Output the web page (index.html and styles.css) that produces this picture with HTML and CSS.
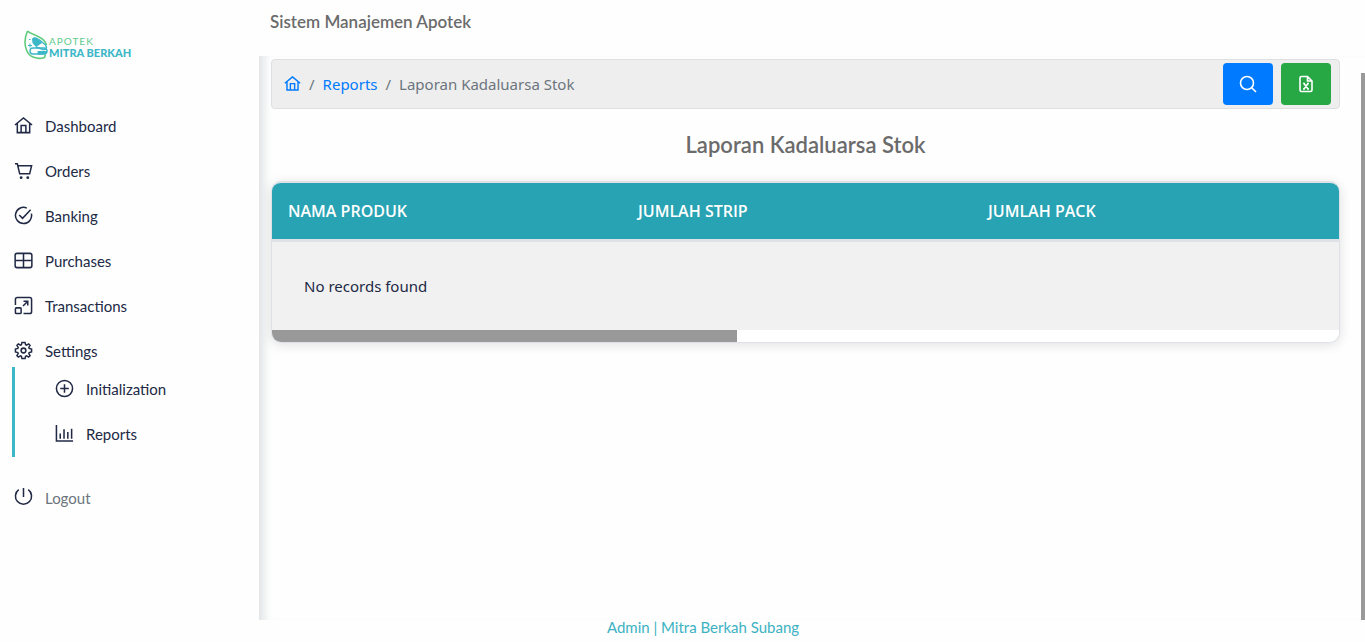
FILE: index.html
```html
<!DOCTYPE html>
<html lang="id">
<head>
    <meta charset="UTF-8">
    <meta name="viewport" content="width=device-width, initial-scale=1.0">
    <title>Sistem Manajemen Apotek</title>
    <link rel="stylesheet" href="styles.css">
</head>
<body>
    <div class="layout">
        <aside class="sidebar">
            <a href="#" class="logo">
                <svg class="logo-mark" viewBox="0 0 24 32" width="24" height="32" fill="none">
                    <path d="M3.500 2C1 8 0 15 2.500 21C5 28 13 31 20.500 28.500L21.500 25.500M3.500 2C6 5 10 5 15 8C19 10 21.500 12 22.500 16" stroke="#5fcb7c" stroke-width="1.600"/>
                    <path d="M8 10C9 7.500 13 7.500 15 10.500L18 14L12 18L8.500 14Z" fill="#3cb7c7"/>
                    <path d="M15 10.500L21.500 16C23.500 18.500 22 21 19 20.500L12 18" stroke="#3cb7c7" stroke-width="1.400"/>
                    <rect x="6" y="19" width="17" height="6" rx="3" stroke="#3cb7c7" stroke-width="1.400"/>
                    <path d="M14 22.500H23C22.500 24.500 21 25 19.500 25H14ZM4 16.500H8M6 14.500V18.500M5 10.500H6.500" fill="#3cb7c7" stroke="#3cb7c7"/>
                </svg>
                <span class="logo-text">
                    <span class="logo-top">APOTEK</span>
                    <span class="logo-name">MITRA BERKAH</span>
                </span>
            </a>

            <nav class="menu">
                <a href="#">
                    <svg class="icon" viewBox="0 0 20 20"><path d="M1 9.500L10 2L19 9.500M3.500 8V17.500H16.500V8M7.500 17.500V10H12.500V17.500"/></svg>
                    Dashboard
                </a>
                <a href="#">
                    <svg class="icon" viewBox="0 0 20 20"><path d="M1 3H3.500L6 13.500H16.500L18.500 5H4.200"/><circle class="dot" cx="7.500" cy="17.500" r="1.500"/><circle class="dot" cx="14.500" cy="17.500" r="1.500"/></svg>
                    Orders
                </a>
                <a href="#">
                    <svg class="icon" viewBox="0 0 20 20"><path d="M18.300 8A8.500 8.500 0 1 1 13.500 2.200M5.500 9.500L9 13L17.500 4"/></svg>
                    Banking
                </a>
                <a href="#">
                    <svg class="icon" viewBox="0 0 20 20"><rect x="1.200" y="2.500" width="17.600" height="15" rx="2"/><path d="M10 2.500V17.500M1.200 10H18.800"/></svg>
                    Purchases
                </a>
                <a href="#">
                    <svg class="icon" viewBox="0 0 20 20"><path d="M1.500 9.500V3.500Q1.500 1.500 3.500 1.500H16.500Q18.500 1.500 18.500 3.500V16.500Q18.500 18.500 16.500 18.500H10M9.500 10.500L14.500 5.500M10 5.500H14.500V10"/><rect x="1.500" y="12.500" width="6" height="6" rx="1"/></svg>
                    Transactions
                </a>
                <a href="#">
                    <svg class="icon" viewBox="0 0 20 20"><path d="M8.400 1.500H11.600L12.200 4L13.200 4.400L15.400 3.100L16.900 4.600L15.600 6.800L16 7.800L18.500 8.400V11.600L16 12.200L15.600 13.200L16.900 15.400L15.400 16.900L13.200 15.600L12.200 16L11.600 18.500H8.400L7.800 16L6.800 15.600L4.600 16.900L3.100 15.400L4.400 13.200L4 12.200L1.500 11.600V8.400L4 7.800L4.400 6.800L3.100 4.600L4.600 3.100L6.800 4.400L7.800 4Z"/><circle cx="10" cy="10" r="2.500"/></svg>
                    Settings
                </a>
                <div class="submenu">
                    <a href="#">
                        <svg class="icon" viewBox="0 0 20 20"><circle cx="10" cy="10" r="8.500"/><path d="M10 5.500V14.500M5.500 10H14.500"/></svg>
                        Initialization
                    </a>
                    <a href="#">
                        <svg class="icon" viewBox="0 0 20 20"><path d="M1.500 1V18H19M5.500 10V15.500M9.500 5.500V15.500M13.500 8.500V15.500M17.500 5V15.500"/></svg>
                        Reports
                    </a>
                </div>
                <a href="#" class="logout">
                    <svg class="icon" viewBox="0 0 20 20"><path d="M10 0V9.500M5 1.700A8.500 8.500 0 1 0 15 1.700"/></svg>
                    Logout
                </a>
            </nav>
        </aside>

        <div class="page">
            <header class="topbar">Sistem Manajemen Apotek</header>

            <div class="body">
                <main class="content">
                    <div class="toolbar">
                        <nav class="breadcrumb">
                            <a href="#" aria-label="Home">
                                <svg class="icon-home" viewBox="0 0 20 20"><path d="M1 8.500L10 1L19 8.500M3.500 7V16.500H16.500V7M7.500 16.500V9H12.500V16.500"/></svg>
                            </a>
                            <span>/</span>
                            <a href="#">Reports</a>
                            <span>/</span>
                            <span>Laporan Kadaluarsa Stok</span>
                        </nav>
                        <button type="button" class="btn btn-search" aria-label="Search">
                            <svg viewBox="0 0 18 18"><circle cx="8" cy="8" r="6.500"/><path d="M12.700 12.700L17 17"/></svg>
                        </button>
                        <button type="button" class="btn btn-excel" aria-label="Export">
                            <svg viewBox="0 0 18 18"><path d="M10.500 1.500H4.500Q3 1.500 3 3V15Q3 16.500 4.500 16.500H13.500Q15 16.500 15 15V6ZM10.500 1.500V6H15M7 8.500L11 14M11 8.500L7 14M6 8.500H8M10 8.500H12M6 14H8M10 14H12"/></svg>
                        </button>
                    </div>

                    <h1>Laporan Kadaluarsa Stok</h1>

                    <div class="card">
                        <table>
                            <thead>
                                <tr>
                                    <th>NAMA PRODUK</th>
                                    <th>JUMLAH STRIP</th>
                                    <th>JUMLAH PACK</th>
                                </tr>
                            </thead>
                            <tbody>
                                <tr>
                                    <td colspan="3">No records found</td>
                                </tr>
                            </tbody>
                        </table>
                        <div class="scroll-x"><div class="thumb-x"></div></div>
                    </div>
                </main>
                <div class="scroll-y"></div>
            </div>
        </div>
    </div>

    <footer>Admin | Mitra Berkah Subang</footer>
</body>
</html>
```
FILE: styles.css
```css
* { box-sizing: border-box; }
body {
    margin: 0;
    min-height: 100vh;
    display: flex;
    flex-direction: column;
    background: #fefefe;
    color: #212945;
    font-family: Lato, "Liberation Sans", sans-serif;
    font-size: 15px;
}
a { text-decoration: none; }
.layout {
    flex: 1;
    display: flex;
}

/* sidebar */
.sidebar {
    width: 259px;
    flex-shrink: 0;
    padding: 29px 12px 0;
}
.logo {
    display: flex;
    align-items: center;
    height: 32px;
    margin: 0 0 42px 12px;
}
.logo-text {
    display: flex;
    flex-direction: column;
    padding-left: 1px;
    padding-top: 3px;
}
.logo-top {
    color: #5fcb8c;
    font-size: 10px;
    line-height: 12px;
    letter-spacing: 1px;
}
.logo-name {
    color: #3cb7c7;
    font-size: 11px;
    font-weight: 900;
    line-height: 12px;
}
.menu a {
    display: flex;
    align-items: center;
    gap: 12px;
    height: 45px;
    padding-left: 2px;
    color: #212945;
}
.icon {
    width: 19px;
    height: 19px;
    fill: none;
    stroke: #212945;
    stroke-width: 1.6;
}
.icon .dot {
    fill: #212945;
    stroke: none;
}
.submenu {
    margin-top: -6px;
    padding-left: 38px;
    border-left: 3px solid #3cb7c7;
}
.submenu a { padding-bottom: 2px; }
.menu .logout {
    margin-top: 18px;
    color: #6c757d;
}

/* main area */
.page {
    flex: 1;
    min-width: 0;
    display: flex;
    flex-direction: column;
}
.topbar {
    height: 56px;
    padding: 12px 11px;
    color: #6b6b6b;
    font-size: 17px;
    font-weight: 600;
    line-height: 20px;
}
.body {
    flex: 1;
    display: flex;
    border-left: 1px solid #e3e7ea;
    box-shadow: inset 10px 0 10px -6px #dfe2e4;
}
.content {
    flex: 1;
    min-width: 0;
    padding: 3px 21px 0 11px;
    font-family: "Noto Sans", "Open Sans", sans-serif;
}
.scroll-y {
    width: 4px;
    margin-top: 17px;
    background: #999;
}
.toolbar {
    display: flex;
    align-items: center;
    gap: 8px;
    height: 50px;
    padding: 0 8px 0 12px;
    background: #eee;
    border: 1px solid #dfdfe2;
    border-radius: 4px;
}
.breadcrumb {
    flex: 1;
    display: flex;
    align-items: center;
    gap: 8px;
    color: #6c757d;
}
.breadcrumb a { color: #007bff; }
.icon-home {
    display: block;
    width: 17px;
    height: 17px;
    fill: none;
    stroke: #007bff;
    stroke-width: 1.7;
}
.btn {
    display: flex;
    align-items: center;
    justify-content: center;
    width: 50px;
    height: 42px;
    padding: 0;
    border: none;
    border-radius: 4px;
    cursor: pointer;
}
.btn svg {
    width: 18px;
    height: 18px;
    fill: none;
    stroke: white;
    stroke-width: 1.6;
}
.btn-search { background: #007bff; }
.btn-excel { background: #28a745; }
h1 {
    margin: 24px 0;
    color: #6b6b6b;
    font-family: Lato, "Liberation Sans", sans-serif;
    font-size: 22px;
    font-weight: 600;
    line-height: 24px;
    text-align: center;
}
.card {
    overflow: hidden;
    background: white;
    border: 1px solid #dee2e6;
    border-top-width: 2px;
    border-radius: 10px;
    box-shadow: 0 2px 12px rgba(0,0,0,0.12);
}
table {
    width: 100%;
    border-collapse: separate;
    border-spacing: 0;
    table-layout: fixed;
}
th {
    width: 350px;
    height: 59px;
    padding: 0 16px;
    background: #28a3b3;
    border-bottom: 3px solid #dee2e6;
    color: white;
    font-family: "Open Sans", sans-serif;
    font-size: 16px;
    font-weight: 600;
    text-align: left;
}
th:last-child { width: auto; }
td {
    height: 88px;
    padding: 0 32px;
    background: #f1f1f1;
}
.scroll-x { height: 12px; }
.thumb-x {
    width: 43.6%;
    height: 12px;
    background: #999;
}
footer {
    height: 22px;
    padding-left: 41px;
    color: #3cb2c3;
    line-height: 14px;
    text-align: center;
}
```
